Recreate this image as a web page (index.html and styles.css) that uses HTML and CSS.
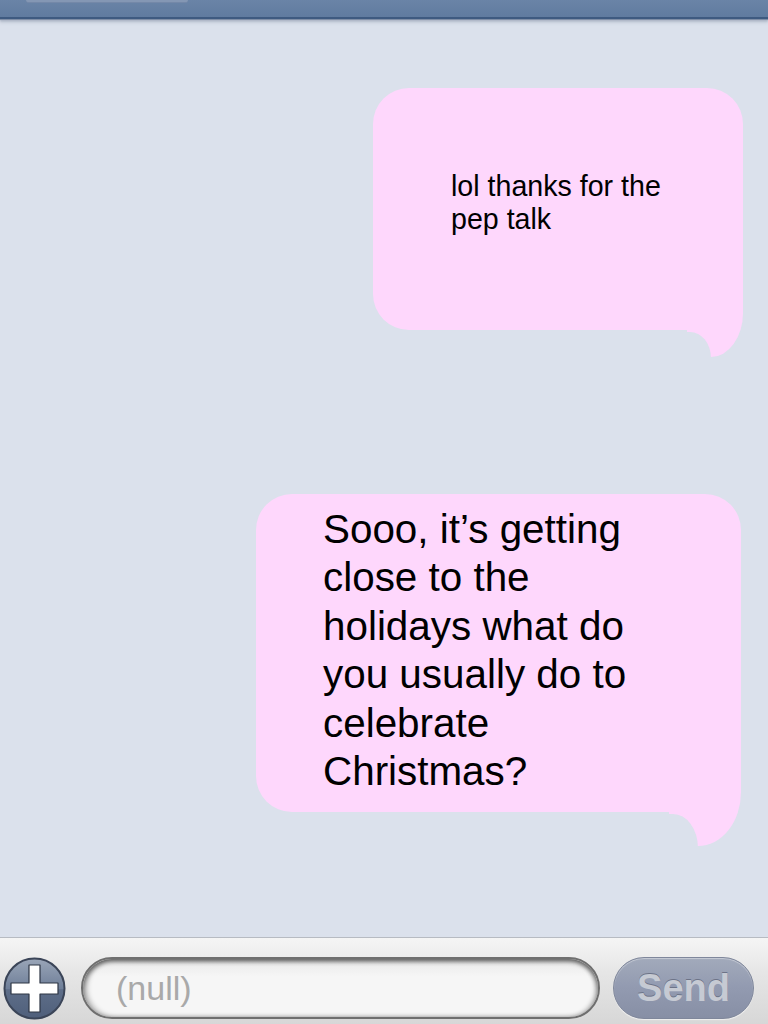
FILE: index.html
```html
<!DOCTYPE html>
<html lang="en">
<head>
<meta charset="utf-8">
<title>Messages</title>
<link rel="stylesheet" href="styles.css">
</head>
<body>
<div class="screen">
  <header class="topbar">
    <div class="topbar-btn"></div>
  </header>
  <main class="chat">
    <div class="bubble bubble-small">lol thanks for the pep talk</div>
    <div class="bubble bubble-large">Sooo, it’s getting close to the holidays what do you usually do to celebrate Christmas?</div>
  </main>
  <footer class="composer">
    <div class="add-btn">
      <svg width="63" height="63" viewBox="0 0 63 63">
        <defs>
          <linearGradient id="g" x1="0" y1="0" x2="0" y2="1">
            <stop offset="0" stop-color="#9aa6b8"/>
            <stop offset="0.5" stop-color="#6f7f99"/>
            <stop offset="0.52" stop-color="#5e6e89"/>
            <stop offset="1" stop-color="#4f5f7b"/>
          </linearGradient>
        </defs>
        <circle cx="31.5" cy="31.5" r="30" fill="url(#g)" stroke="#3b4558" stroke-width="2"/>
        <path d="M26 8 H37 V26 H55 V37 H37 V55 H26 V37 H8 V26 H26 Z" fill="#ffffff" stroke="#2e3645" stroke-width="1.2" stroke-linejoin="round"/>
      </svg>
    </div>
    <div class="input">(null)</div>
    <div class="send">Send</div>
  </footer>
</div>
</body>
</html>
```
FILE: styles.css
```css
html, body {
  margin: 0;
  padding: 0;
}
body {
  background: #dbe1ec;
  font-family: "Liberation Sans", Arial, sans-serif;
}
.screen {
  width: 768px;
  height: 1024px;
  display: flex;
  flex-direction: column;
  overflow: hidden;
}
.topbar {
  height: 17px;
  flex: none;
  background: linear-gradient(#6a84a7, #607b9f);
  border-bottom: 2px solid #3e5a80;
  box-shadow: 0 1px 0 #7f8ea6, 0 2px 2px #a7b1c2, 0 4px 3px #c5ccd9;
  display: flex;
  align-items: flex-start;
  padding-left: 26px;
  position: relative;
  z-index: 1;
}
.topbar-btn {
  width: 162px;
  height: 2px;
  background: #8497b4;
  border-bottom: 1px solid #7488a8;
  border-radius: 0 0 8px 8px;
}
.chat {
  flex: 1;
  display: flex;
  flex-direction: column;
  align-items: flex-end;
  padding-top: 69px;
}
.bubble {
  position: relative;
  background: #fed7fc;
  color: #000;
  box-sizing: border-box;
  border-radius: 36px;
}
.bubble::before {
  content: "";
  position: absolute;
  right: 0;
  background: #fed7fc;
}
.bubble::after {
  content: "";
  position: absolute;
  background: #dbe1ec;
}
.bubble-small {
  width: 370px;
  height: 242px;
  margin-right: 25px;
  padding: 82px 58px 0 78px;
  font-size: 28.6px;
  line-height: 33px;
}
.bubble-small::before {
  width: 56px;
  height: 70px;
  bottom: -27px;
  border-bottom-right-radius: 32px 44px;
}
.bubble-small::after {
  width: 60px;
  height: 40px;
  bottom: -42px;
  right: 32px;
  border-top-right-radius: 21px 26px;
}
.bubble-large {
  width: 485px;
  height: 318px;
  margin-right: 27px;
  margin-top: 164px;
  padding: 11px 84px 0 67px;
  font-size: 40.4px;
  line-height: 48.4px;
}
.bubble-large::before {
  width: 72px;
  height: 84px;
  bottom: -34px;
  border-bottom-right-radius: 43px 54px;
}
.bubble-large::after {
  width: 70px;
  height: 50px;
  bottom: -52px;
  right: 43px;
  border-top-right-radius: 25px 34px;
}
.composer {
  flex: none;
  height: 87px;
  border-top: 1px solid #b7bbc2;
  background: linear-gradient(#f5f5f5, #e6e6e6 40%, #d7d7d7);
  display: flex;
  align-items: flex-start;
  padding: 19px 14px 0 3px;
  box-sizing: border-box;
}
.add-btn {
  width: 63px;
  height: 63px;
  flex: none;
}
.add-btn svg {
  display: block;
}
.input {
  margin-left: 15px;
  width: 519px;
  height: 62px;
  box-sizing: border-box;
  border: 2px solid #6f6f6f;
  border-radius: 31px;
  background: linear-gradient(#e8e8e8, #f6f6f6 30%, #f6f6f6);
  box-shadow: inset 0 3px 4px rgba(0, 0, 0, 0.45), inset 4px 0 5px rgba(0, 0, 0, 0.25), inset -3px 0 4px rgba(0, 0, 0, 0.2);
  color: #a9a9a9;
  font-size: 34px;
  line-height: 58px;
  padding-left: 33px;
  flex: none;
}
.send {
  margin-left: 13px;
  width: 141px;
  height: 62px;
  box-sizing: border-box;
  border: 1px solid #7f879b;
  border-radius: 31px;
  background: linear-gradient(#a2aabb, #929ab0 50%, #878fa5);
  box-shadow: inset 0 1px 1px rgba(255, 255, 255, 0.4), 0 1px 1px rgba(255, 255, 255, 0.6);
  color: #c6cad3;
  font-weight: bold;
  font-size: 38px;
  line-height: 60px;
  text-align: center;
  text-shadow: 0 -1px 0 #6c7387;
  flex: none;
}
```
